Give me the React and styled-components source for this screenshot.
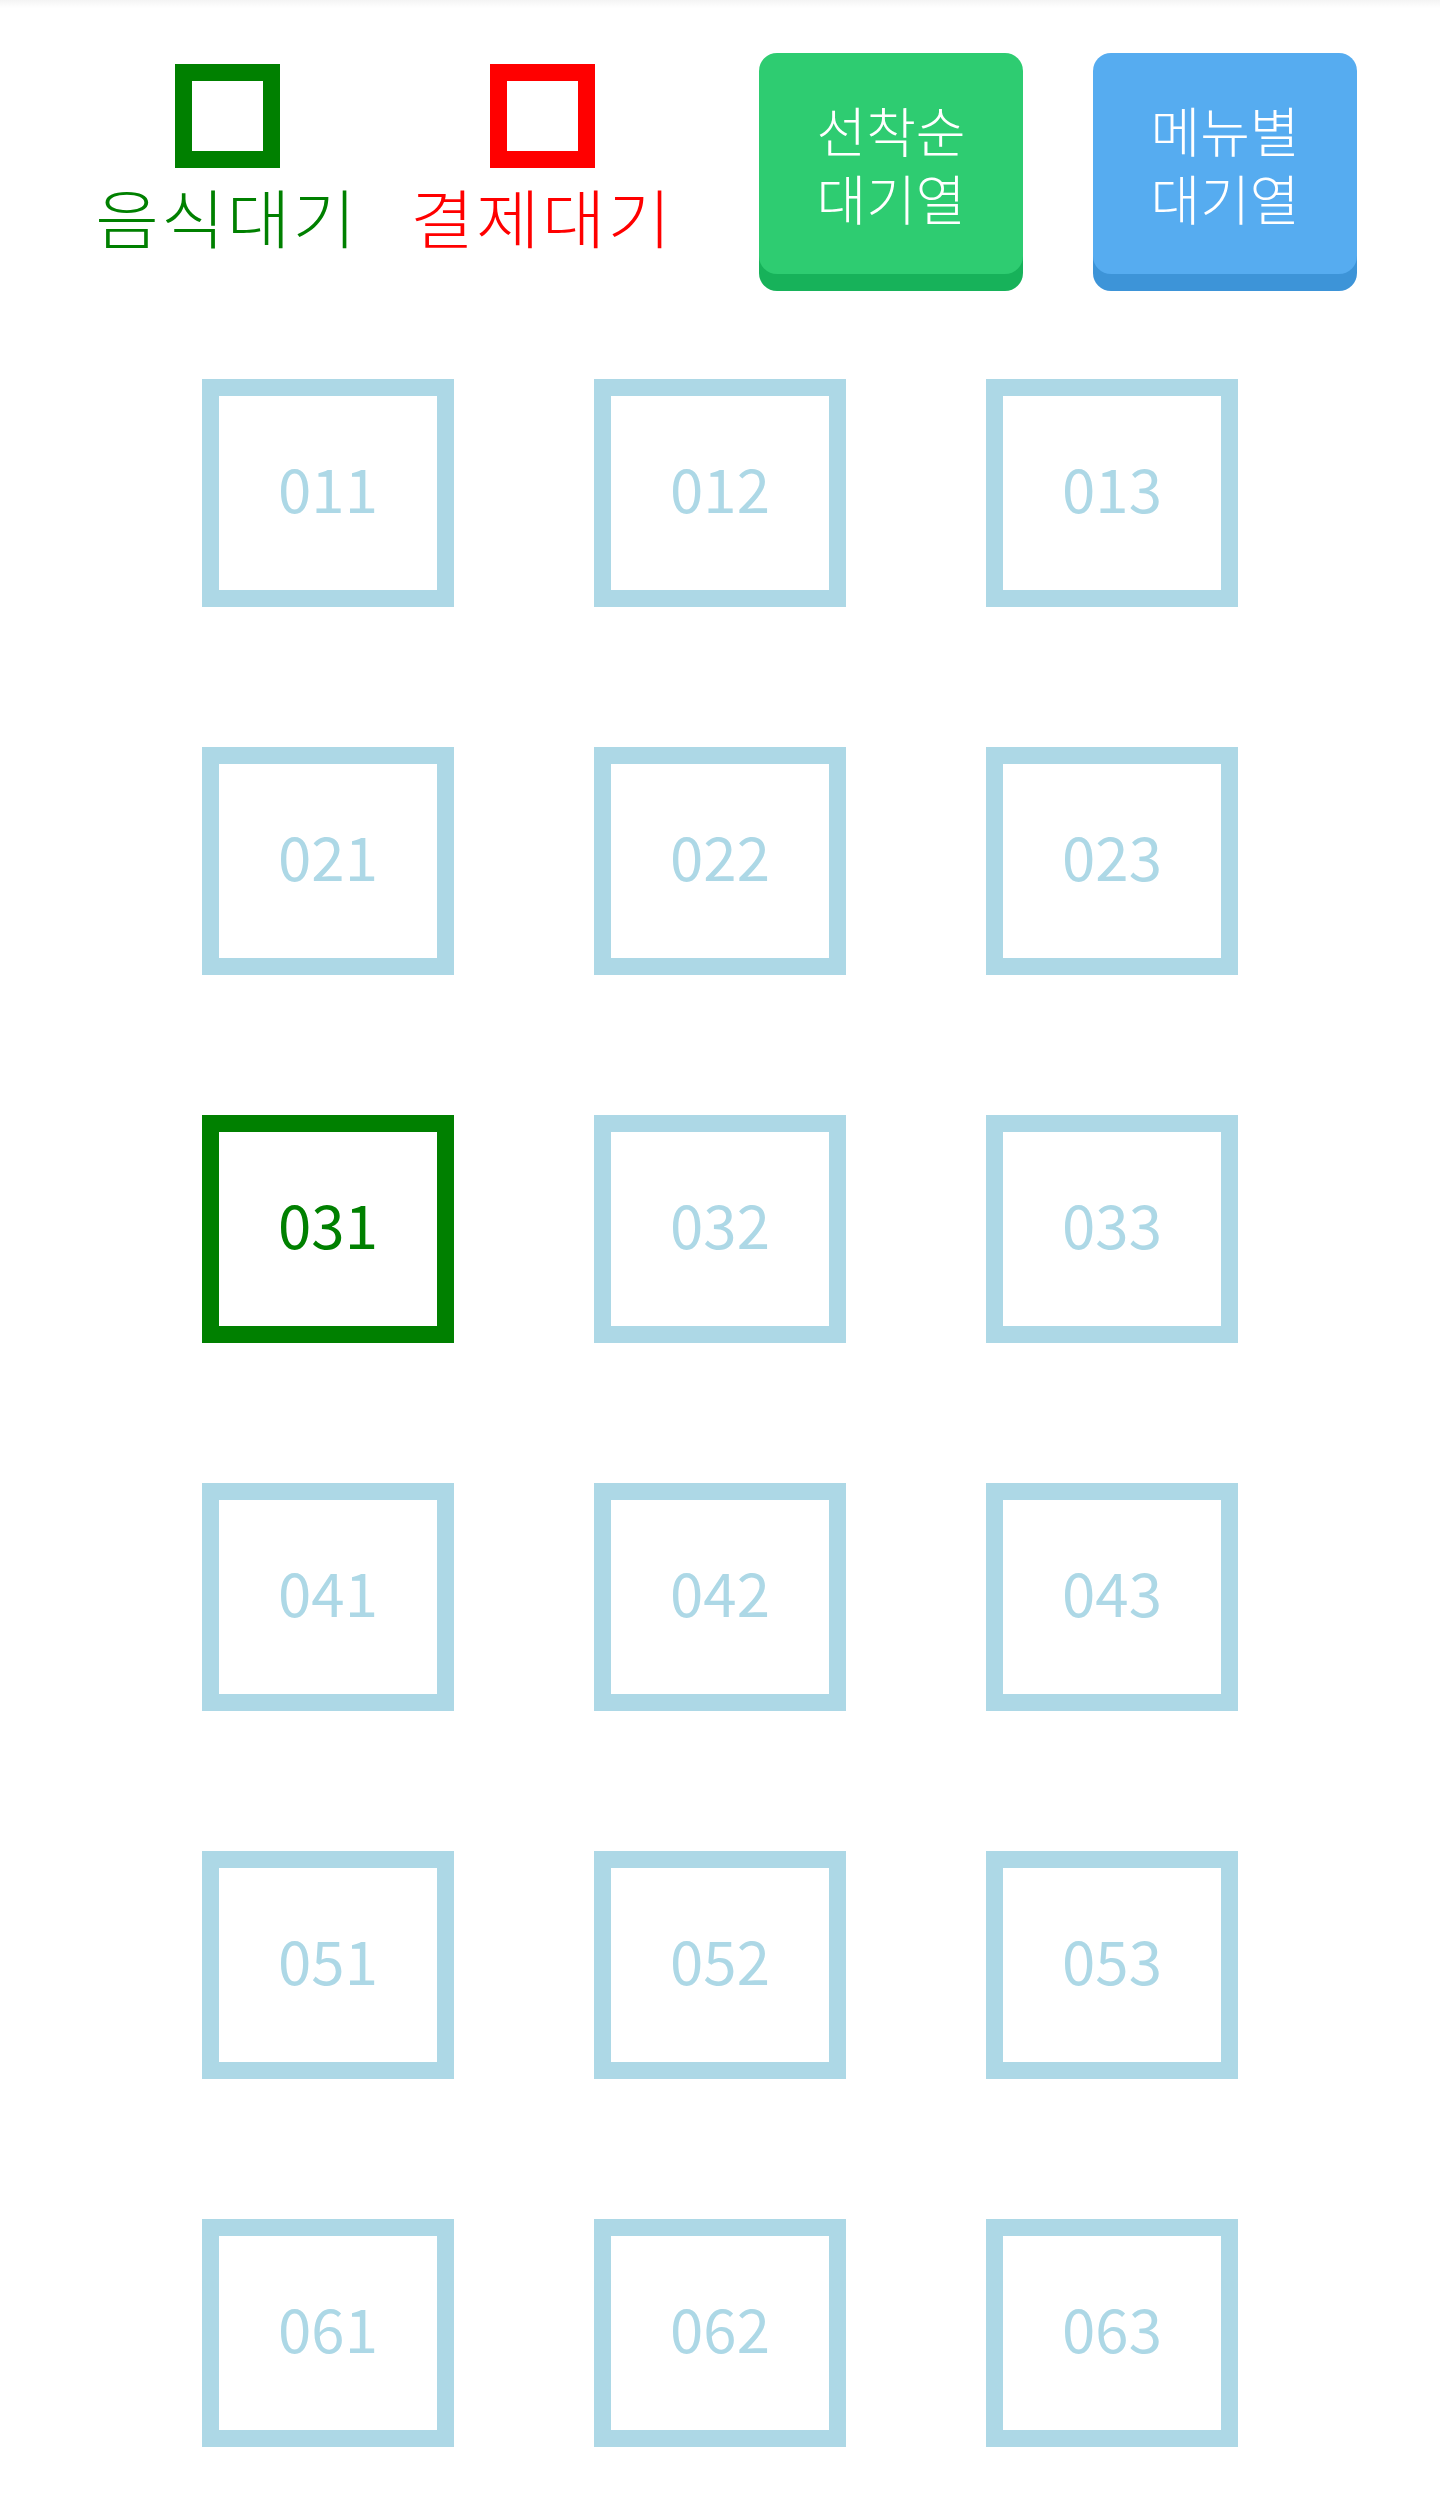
import React from "react";
import styled, { createGlobalStyle } from "styled-components";

const GlobalStyle = createGlobalStyle`
  html, body {
    margin: 0;
    padding: 0;
    background: #fff;
  }
  body {
    font-family: "Noto Sans CJK KR", "Noto Sans", sans-serif;
    background: linear-gradient(#f4f4f4, #fff 8px) no-repeat;
  }
`;

const STATUS_COLORS = {
  food: "#008000",
  pay: "#ff0000",
  idle: "#add8e6",
};

const TABLES = [
  ["011", "012", "013"],
  ["021", "022", "023"],
  ["031", "032", "033"],
  ["041", "042", "043"],
  ["051", "052", "053"],
  ["061", "062", "063"],
];

const WAITING_FOOD = ["031"];
const WAITING_PAY = [];

const Page = styled.div`
  width: 1440px;
  padding-bottom: 60px;
`;

const Header = styled.header`
  display: flex;
  align-items: flex-start;
  padding: 53px 0 0 99px;
`;

const LegendGroup = styled.div`
  display: flex;
  gap: 59px;
`;

const LegendItem = styled.div`
  width: 256px;
  display: flex;
  flex-direction: column;
  align-items: center;
  padding-top: 11px;
`;

const LegendBox = styled.div`
  box-sizing: border-box;
  width: 105px;
  height: 104px;
  border: 17px solid ${(p) => p.$color};
`;

const LegendLabel = styled.div`
  margin-top: 15px;
  font-size: 64px;
  font-weight: 300;
  letter-spacing: 2px;
  line-height: 1;
  color: ${(p) => p.$color};
  white-space: nowrap;
  transform: scaleX(1.08);
`;

const ButtonGroup = styled.div`
  display: flex;
  gap: 70px;
  margin-left: 89px;
`;

const QueueButton = styled.button`
  display: flex;
  flex-direction: column;
  align-items: center;
  justify-content: center;
  width: 264px;
  height: 221px;
  padding: 0;
  border: none;
  border-radius: 18px;
  background: ${(p) => p.$face};
  box-shadow: 0 17px 0 ${(p) => p.$edge};
  color: #fff;
  font-family: inherit;
  font-size: 54px;
  font-weight: 300;
  cursor: pointer;
`;

const ButtonLine = styled.span`
  display: block;
  height: 68px;
  line-height: 68px;
`;

const Grid = styled.main`
  display: grid;
  grid-template-columns: repeat(3, 252px);
  grid-auto-rows: 228px;
  gap: 140px;
  justify-content: center;
  margin-top: 105px;
`;

const Table = styled.div`
  box-sizing: border-box;
  border: 17px solid ${(p) => p.$color};
  padding-bottom: 12px;
  display: flex;
  align-items: center;
  justify-content: center;
  font-size: 60px;
  line-height: 1;
  color: ${(p) => p.$color};
`;

function tableStatus(id) {
  if (WAITING_FOOD.includes(id)) return "food";
  if (WAITING_PAY.includes(id)) return "pay";
  return "idle";
}

function App() {
  return (
    <Page>
      <GlobalStyle />
      <Header>
        <LegendGroup>
          <LegendItem>
            <LegendBox $color={STATUS_COLORS.food} />
            <LegendLabel $color={STATUS_COLORS.food}>음식대기</LegendLabel>
          </LegendItem>
          <LegendItem>
            <LegendBox $color={STATUS_COLORS.pay} />
            <LegendLabel $color={STATUS_COLORS.pay}>결제대기</LegendLabel>
          </LegendItem>
        </LegendGroup>
        <ButtonGroup>
          <QueueButton $face="#2ecc71" $edge="#17b25a">
            <ButtonLine>선착순</ButtonLine>
            <ButtonLine>대기열</ButtonLine>
          </QueueButton>
          <QueueButton $face="#56acf0" $edge="#3d94d8">
            <ButtonLine>메뉴별</ButtonLine>
            <ButtonLine>대기열</ButtonLine>
          </QueueButton>
        </ButtonGroup>
      </Header>
      <Grid>
        {TABLES.flat().map((id) => {
          const color = STATUS_COLORS[tableStatus(id)];
          return (
            <Table key={id} $color={color}>
              {id}
            </Table>
          );
        })}
      </Grid>
    </Page>
  );
}

export default App;
